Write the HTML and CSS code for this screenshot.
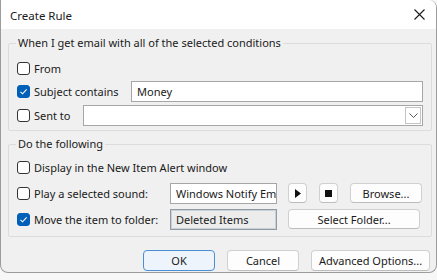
FILE: index.html
```html
<!DOCTYPE html>
<html lang="en">
<head>
    <meta charset="UTF-8">
    <title>Create Rule</title>
    <link rel="stylesheet" href="styles.css">
</head>
<body>
    <div class="dialog">
        <div class="titlebar">
            <span class="title">Create Rule</span>
            <svg class="close" width="11" height="11" viewBox="0 0 11 11">
                <path d="M0.5 0.5 L10.5 10.5 M10.5 0.5 L0.5 10.5" stroke="#1a1a1a" stroke-width="1.1"/>
            </svg>
        </div>

        <div class="content">
            <fieldset class="group conditions">
                <legend>When I get email with all of the selected conditions</legend>
                <div class="row">
                    <label class="check"><span class="box"></span>From</label>
                </div>
                <div class="row">
                    <label class="check subject-label"><span class="box checked"></span>Subject contains</label>
                    <div class="field grow">Money</div>
                </div>
                <div class="row">
                    <label class="check sent-label"><span class="box"></span>Sent to</label>
                    <div class="field grow combo">
                        <span class="drop">
                            <svg width="9" height="5" viewBox="0 0 9 5"><path d="M0.5 0.5 L4.5 4.5 L8.5 0.5" fill="none" stroke="#555" stroke-width="1"/></svg>
                        </span>
                    </div>
                </div>
            </fieldset>

            <fieldset class="group actions">
                <legend>Do the following</legend>
                <div class="row first">
                    <label class="check"><span class="box"></span>Display in the New Item Alert window</label>
                </div>
                <div class="row tall">
                    <label class="check wide-label"><span class="box"></span>Play a selected sound:</label>
                    <div class="field short">Windows Notify Em</div>
                    <button class="btn icon-btn">
                        <svg width="6" height="9" viewBox="0 0 6 9"><path d="M0 0 L6 4.5 L0 9 Z" fill="#111"/></svg>
                    </button>
                    <button class="btn icon-btn stop">
                        <svg width="7" height="7" viewBox="0 0 7 7"><rect width="7" height="7" fill="#111"/></svg>
                    </button>
                    <button class="btn browse">Browse...</button>
                </div>
                <div class="row tall">
                    <label class="check wide-label"><span class="box checked"></span>Move the item to folder:</label>
                    <div class="field short readonly">Deleted Items</div>
                    <button class="btn select-folder">Select Folder...</button>
                </div>
            </fieldset>

            <div class="buttons">
                <button class="btn dlg default">OK</button>
                <button class="btn dlg">Cancel</button>
                <button class="btn dlg advanced">Advanced Options...</button>
            </div>
        </div>
    </div>
</body>
</html>
```

FILE: styles.css
```css
body {
    margin: 0;
    background: #f7f7f7;
    font-family: "Noto Sans", sans-serif;
    font-size: 11px;
    color: #1a1a1a;
}
.dialog {
    width: 435px;
    height: 272px;
    background: #f0f0f0;
    border: 1px solid #9c9c9c;
    border-top: none;
    border-radius: 0 8px 8px 8px;
    overflow: hidden;
}
.titlebar {
    height: 29px;
    background: #ffffff;
    display: flex;
    align-items: center;
    justify-content: space-between;
    padding: 0 11px 0 9px;
}
.title {
    font-size: 11.5px;
    margin-top: 1px;
}
.content {
    padding: 7px 4px 0 7px;
}
.group {
    margin: 0;
    padding: 0 8px;
    border: 1px solid #dcdcdc;
    border-radius: 2px;
}
.group legend {
    padding: 0 2px;
    margin-left: -1px;
    line-height: 14px;
}
.conditions {
    padding-top: 8px;
    padding-bottom: 4px;
}
.actions {
    margin-top: 6px;
    padding-top: 6px;
    padding-bottom: 7px;
}
.row {
    display: flex;
    align-items: center;
    height: 20px;
}
.conditions .row + .row {
    height: 21px;
    margin-top: 3px;
}
.actions .row.tall {
    margin-top: 6px;
}
.check {
    display: flex;
    align-items: center;
    gap: 4px;
    white-space: nowrap;
}
.box {
    width: 11px;
    height: 11px;
    border: 1px solid #333;
    border-radius: 3px;
    background: #fff;
    flex: none;
}
.box.checked {
    border-color: #005fb8;
    background: #005fb8 url("data:image/svg+xml;utf8,<svg xmlns='http://www.w3.org/2000/svg' width='11' height='11' viewBox='0 0 11 11'><path d='M2.5 5.8 L4.6 7.8 L8.6 3.4' fill='none' stroke='white' stroke-width='1.1'/></svg>") no-repeat center;
}
.subject-label {
    width: 114px;
}
.sent-label {
    width: 66px;
}
.wide-label {
    width: 153px;
}
.field {
    height: 19px;
    line-height: 19px;
    border: 1px solid #a6a6a6;
    background: #fff;
    padding: 0 5px;
    box-sizing: content-box;
    white-space: nowrap;
    overflow: hidden;
}
.field.grow {
    flex: 1;
}
.combo {
    display: flex;
    justify-content: flex-end;
    align-items: center;
    padding-right: 1px;
}
.drop {
    width: 16px;
    height: 17px;
    border: 1px solid #c4c4c4;
    display: flex;
    align-items: center;
    justify-content: center;
    box-sizing: border-box;
}
.field.short {
    width: 95px;
}
.field.readonly {
    background: #ececec;
    border-color: #8e9aa6;
    box-shadow: inset 0 0 0 1px #c9d0d6;
}
.btn {
    font-family: inherit;
    font-size: 11px;
    color: #1a1a1a;
    background: #fdfdfd;
    border: 1px solid #d0d0d0;
    border-bottom-color: #bdbdbd;
    border-radius: 4px;
    height: 20px;
    padding: 0;
}
.icon-btn {
    width: 19px;
    margin-left: 11px;
    display: flex;
    align-items: center;
    justify-content: center;
}
.icon-btn.stop {
    margin-left: 12px;
}
.browse {
    width: 72px;
    margin-left: 12px;
}
.select-folder {
    width: 132px;
    margin-left: 11px;
}
.buttons {
    display: flex;
    justify-content: flex-end;
    gap: 12px;
    margin-top: 13px;
    padding-right: 2px;
}
.btn.dlg {
    width: 72px;
    height: 21px;
}
.btn.default {
    border: 1px solid #4a8fd6;
    background: #eef4fb;
}
.btn.advanced {
    width: 119px;
}
```
